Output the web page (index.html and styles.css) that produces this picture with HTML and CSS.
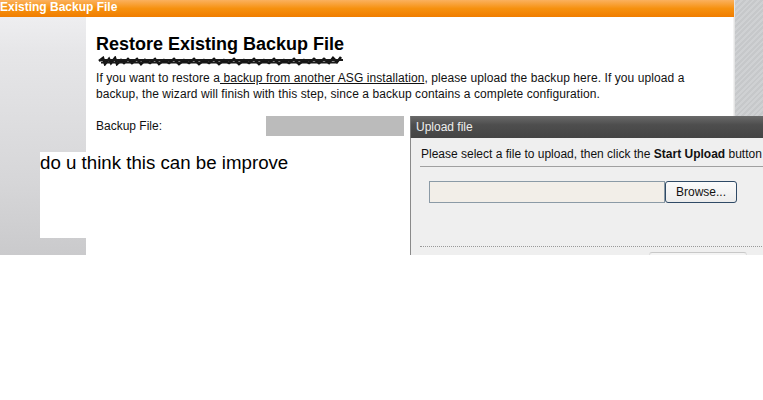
FILE: index.html
```html
<!DOCTYPE html>
<html>
<head>
<meta charset="utf-8">
<link rel="stylesheet" href="styles.css">
</head>
<body>
<div class="screen">
  <div class="main">
    <div class="topbar">Existing Backup File</div>
    <div class="row">
      <div class="sidebar"></div>
      <div class="content">
        <h1 class="title">Restore Existing Backup File</h1>
        <svg class="scribble" width="250" height="10" viewBox="0 0 250 10">
          <path d="M2 5 L6 2 L8 8 L12 3 L14 7 L18 2 L20 8 L24 4 L27 7 L31 3 L35 7 L40 3 L44 8 L48 4 L53 7 L58 3 L62 8 L67 4 L72 7 L77 3 L82 8 L87 4 L92 7 L97 3 L102 8 L107 4 L112 7 L117 3 L122 8 L127 4 L132 7 L137 3 L142 8 L147 4 L152 7 L157 3 L162 8 L167 4 L172 7 L177 3 L182 8 L187 4 L192 7 L197 3 L202 8 L207 4 L212 7 L217 3 L222 7 L227 3 L232 7 L236 2 L240 6 L244 1" fill="none" stroke="#111" stroke-width="2.6"/>
          <path d="M3 4 L246 4 M4 6.5 L240 6.5" fill="none" stroke="#1a1a1a" stroke-width="2"/>
        </svg>
        <p class="intro">If you want to restore a<span class="u"> backup from another ASG installation</span>, please upload the backup here. If you upload a backup, the wizard will finish with this step, since a backup contains a complete configuration.</p>
        <div class="field">
          <span class="label">Backup File:</span>
          <span class="filebox"></span>
        </div>
      </div>
    </div>
  </div>
  <div class="stripes"></div>

  <div class="note">do u think this can be improve</div>

  <div class="dialog">
    <div class="dlg-title">Upload file</div>
    <div class="dlg-body">
      <div class="dlg-msg">Please select a file to upload, then click the <b>Start Upload</b> button</div>
      <div class="dlg-pick">
        <span class="dlg-input"></span>
        <span class="dlg-btn">Browse...</span>
      </div>
      <div class="dlg-dots"></div>
      <div class="dlg-footbtn"></div>
    </div>
  </div>
</div>
</body>
</html>
```

FILE: styles.css
```css
html, body {
  margin: 0;
  padding: 0;
  background: #fff;
  font-family: "Liberation Sans", Arial, sans-serif;
}

.screen {
  position: relative;
  width: 763px;
  height: 255px;
  display: flex;
  overflow: hidden;
}

.main {
  width: 735px;
  display: flex;
  flex-direction: column;
}

.topbar {
  height: 17px;
  background: linear-gradient(#fbb15e, #f6910f 50%, #f07d00);
  color: #fff;
  font-weight: bold;
  font-size: 12px;
  line-height: 15px;
  white-space: nowrap;
}

.row {
  flex: 1;
  display: flex;
}

.sidebar {
  width: 86px;
  background: linear-gradient(#eeeef0, #e6e6e8 15%, #d6d6d8 70%, #cacacc);
}

.content {
  flex: 1;
  background: #fff;
  padding: 16px 0 0 10px;
  border-right: 1px solid #f2f2f2;
}

.title {
  margin: 0;
  font-size: 18px;
  line-height: 22px;
  font-weight: bold;
  color: #000;
}

.scribble {
  display: block;
  margin: 1px 0 0 1px;
}

.intro {
  margin: 4px 0 0 0;
  font-size: 12px;
  letter-spacing: 0.08px;
  line-height: 16px;
  color: #111;
  width: 610px;
}

.u {
  text-decoration: underline;
}

.field {
  margin-top: 14px;
  display: flex;
  align-items: center;
  height: 20px;
  font-size: 12px;
  color: #111;
}

.label {
  width: 170px;
}

.filebox {
  width: 138px;
  height: 20px;
  background: #bbbbbb;
}

.stripes {
  width: 28px;
  border-left: 1px solid #e4e4e4;
  background: repeating-linear-gradient(-45deg, #c6c8ca 0 2px, #cfd1d3 2px 4px);
}

.note {
  position: absolute;
  left: 40px;
  top: 152px;
  width: 250px;
  height: 86px;
  background: #fff;
  font-size: 18.7px;
  line-height: 22px;
  color: #000;
}

.dialog {
  position: absolute;
  left: 410px;
  top: 116px;
  width: 360px;
  height: 145px;
  display: flex;
  flex-direction: column;
}

.dlg-title {
  height: 22px;
  background: linear-gradient(#6a6a6a, #4e4e4e 40%, #444);
  color: #eee;
  font-size: 12px;
  line-height: 22px;
  padding-left: 5px;
  border-left: 1px solid #777;
}

.dlg-body {
  flex: 1;
  position: relative;
  background: #efefef;
  border-left: 1px solid #8a8a8a;
  padding-left: 9px;
}

.dlg-msg {
  font-size: 12px;
  line-height: 16px;
  padding: 8px 0 4px 1px;
  border-bottom: 1px solid #a0a0a0;
  white-space: nowrap;
  color: #111;
}

.dlg-pick {
  display: flex;
  margin: 14px 0 0 9px;
}

.dlg-input {
  width: 234px;
  height: 20px;
  background: #f2eee8;
  border: 1px solid #8b9aa6;
}

.dlg-btn {
  width: 70px;
  height: 20px;
  border: 1px solid #2f4a66;
  border-radius: 3px;
  background: linear-gradient(#fbfbfb, #ececec);
  font-size: 12px;
  line-height: 20px;
  text-align: center;
  color: #111;
}

.dlg-dots {
  margin-top: 43px;
  border-top: 1px dotted #999;
}

.dlg-footbtn {
  position: absolute;
  left: 238px;
  top: 114px;
  width: 96px;
  height: 10px;
  border-top: 1px solid #c8c8c8;
  border-left: 1px solid #ddd;
  border-right: 1px solid #ddd;
  border-radius: 3px 3px 0 0;
  background: #f4f4f4;
}
```
